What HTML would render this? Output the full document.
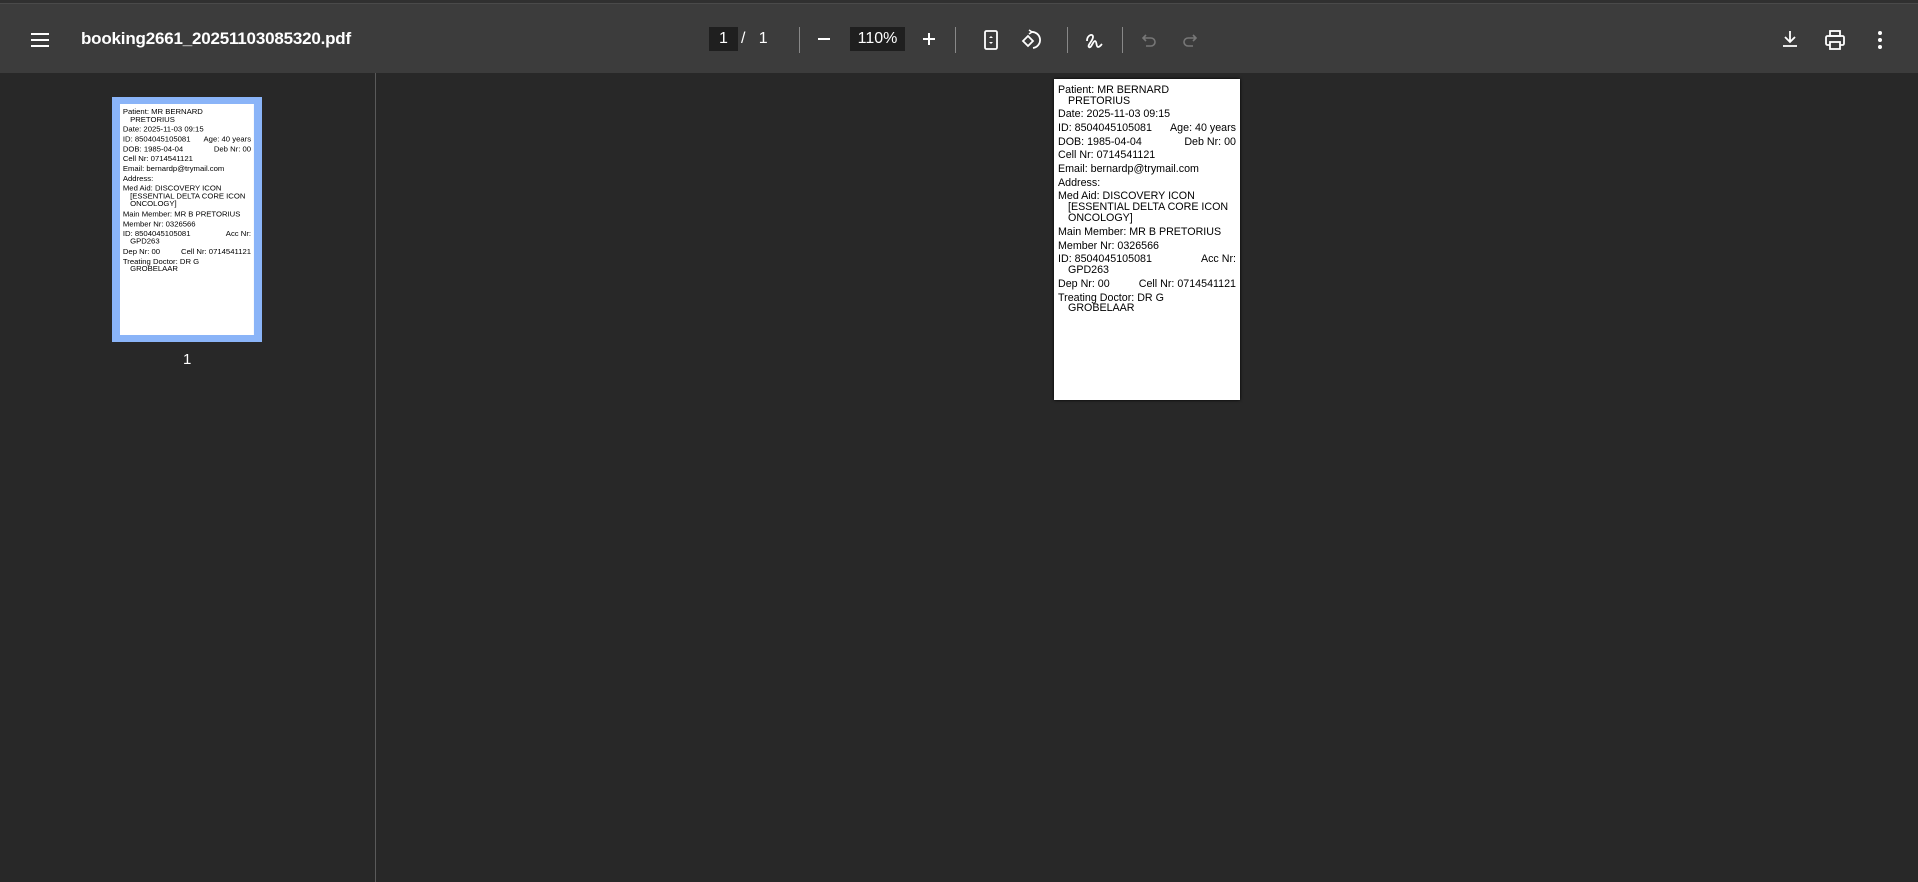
<!DOCTYPE html>
<html><head><meta charset="utf-8"><style>
*{margin:0;padding:0;box-sizing:border-box}
body{width:1918px;height:882px;background:#282828;overflow:hidden;font-family:"Liberation Sans",sans-serif;position:relative}
.tb{position:absolute;left:0;top:0;width:1918px;height:73px;background:#3c3c3c;border-top:3px solid #303030}
.tb .topline{position:absolute;left:0;top:0;width:100%;height:1px;background:#4a4a4a}
.ab{position:absolute}
.title{left:81px;top:26px;color:#fff;font-size:17px;font-weight:bold;letter-spacing:-0.2px}
.box{background:#1f1f1f;color:#fff;font-size:16px;text-align:center;line-height:24px;height:24px}
.sep{width:1px;height:26px;top:24px;background:#888}
.side{position:absolute;left:375px;top:73px;width:1px;height:809px;background:#5a5a5a}
.page{position:absolute;width:186px;height:321px;background:#fff;font-size:10.7px;color:#000;line-height:11px}
.page div{position:absolute;left:4px;right:4px;white-space:nowrap}
.page .i{left:14px}
.page .r{display:flex;justify-content:space-between}
</style></head><body>
<div class="tb"><div class="topline"></div>
<svg class="ab" style="left:30px;top:27px" width="20" height="20" viewBox="0 0 20 20"><path d="M1 4h18M1 10h18M1 16h18" stroke="#fff" stroke-width="2"/></svg>
<div class="ab title">booking2661_20251103085320.pdf</div>
<div class="ab box" style="left:709px;top:24px;width:29px">1</div>
<div class="ab" style="left:741px;top:27px;color:#fff;font-size:16px">/&nbsp;&nbsp;&nbsp;1</div>
<div class="ab sep" style="left:799px"></div>
<svg class="ab" style="left:816px;top:28px" width="16" height="16"><path d="M2 8h12" stroke="#fff" stroke-width="2"/></svg>
<div class="ab box" style="left:850px;top:24px;width:55px">110%</div>
<svg class="ab" style="left:921px;top:28px" width="16" height="16"><path d="M2 8h12M8 2v12" stroke="#fff" stroke-width="2"/></svg>
<div class="ab sep" style="left:955px"></div>
<svg class="ab" style="left:982px;top:26px" width="18" height="22" viewBox="0 0 18 22"><rect x="3" y="2" width="12" height="18" rx="1.5" fill="none" stroke="#fff" stroke-width="1.8"/><path d="M7 9l2-2 2 2zM7 13l2 2 2-2z" fill="#fff"/></svg>
<svg class="ab" style="left:1019px;top:25px" width="24" height="24" viewBox="0 0 24 24"><path d="M4 13l5-5 5 5-5 5z" fill="none" stroke="#fff" stroke-width="1.8"/><path d="M12 4a8 8 0 0 1 2 16" fill="none" stroke="#fff" stroke-width="1.8"/><path d="M10 2l3 2-3 2" fill="none" stroke="#fff" stroke-width="1.6"/></svg>
<div class="ab sep" style="left:1067px"></div>
<svg class="ab" style="left:1083px;top:26px" width="22" height="22" viewBox="0 0 22 22"><path d="M4 12c0-6 6-8 6-4s-6 8-4 10 4-6 6-6 1 6 3 6 3-2 4-3" fill="none" stroke="#fff" stroke-width="1.8"/></svg>
<div class="ab sep" style="left:1122px"></div>
<svg class="ab" style="left:1141px;top:28px" width="18" height="18" viewBox="0 0 18 18"><path d="M5 4L2 7l3 3M2 7h8a4 4 0 0 1 0 8H5" fill="none" stroke="#777" stroke-width="1.6"/></svg>
<svg class="ab" style="left:1180px;top:28px" width="18" height="18" viewBox="0 0 18 18"><path d="M13 4l3 3-3 3M16 7H8a4 4 0 0 0 0 8h5" fill="none" stroke="#777" stroke-width="1.6"/></svg>
<svg class="ab" style="left:1780px;top:26px" width="20" height="20" viewBox="0 0 20 20"><path d="M10 2v11M5 8l5 5 5-5M3 17h14" fill="none" stroke="#fff" stroke-width="1.8"/></svg>
<svg class="ab" style="left:1824px;top:26px" width="22" height="22" viewBox="0 0 22 22"><rect x="6" y="2" width="10" height="5" fill="none" stroke="#fff" stroke-width="1.8"/><rect x="2" y="7" width="18" height="9" rx="1.5" fill="none" stroke="#fff" stroke-width="1.8"/><rect x="6" y="13" width="10" height="7" fill="#3c3c3c" stroke="#fff" stroke-width="1.8"/></svg>
<svg class="ab" style="left:1876px;top:27px" width="8" height="20"><circle cx="4" cy="3" r="2" fill="#fff"/><circle cx="4" cy="10" r="2" fill="#fff"/><circle cx="4" cy="17" r="2" fill="#fff"/></svg>
</div>
<div class="side"></div>

<div class="ab" style="left:112px;top:97px;width:150px;height:245px;background:#8ab4f8"></div>
<div class="ab" style="left:120px;top:104px;width:134px;height:231px;overflow:hidden">
<div id="thumb" class="page" style="left:0;top:0;transform:scale(0.72);transform-origin:0 0"></div>
</div>
<div class="ab" style="left:183px;top:351px;color:#fff;font-size:15px">1</div>

<div id="main" class="page" style="left:1054px;top:79px;box-shadow:0 0 3px #000">
<div style="top:6px">Patient: MR BERNARD</div>
<div class="i" style="top:17px">PRETORIUS</div>
<div style="top:30px">Date: 2025-11-03 09:15</div>
<div class="r" style="top:44px"><span>ID: 8504045105081</span><span>Age: 40 years</span></div>
<div class="r" style="top:58px"><span>DOB: 1985-04-04</span><span>Deb Nr: 00</span></div>
<div style="top:71px">Cell Nr: 0714541121</div>
<div style="top:85px">Email: bernardp@trymail.com</div>
<div style="top:99px">Address:</div>
<div style="top:112px">Med Aid: DISCOVERY ICON</div>
<div class="i" style="top:123px">[ESSENTIAL DELTA CORE ICON</div>
<div class="i" style="top:134px">ONCOLOGY]</div>
<div style="top:148px">Main Member: MR B PRETORIUS</div>
<div style="top:162px">Member Nr: 0326566</div>
<div class="r" style="top:175px"><span>ID: 8504045105081</span><span>Acc Nr:</span></div>
<div class="i" style="top:186px">GPD263</div>
<div class="r" style="top:200px"><span>Dep Nr: 00</span><span>Cell Nr: 0714541121</span></div>
<div style="top:214px">Treating Doctor: DR G</div>
<div class="i" style="top:224px">GROBELAAR</div>
</div>
<script>document.getElementById('thumb').innerHTML=document.getElementById('main').innerHTML;</script>
</body></html>
